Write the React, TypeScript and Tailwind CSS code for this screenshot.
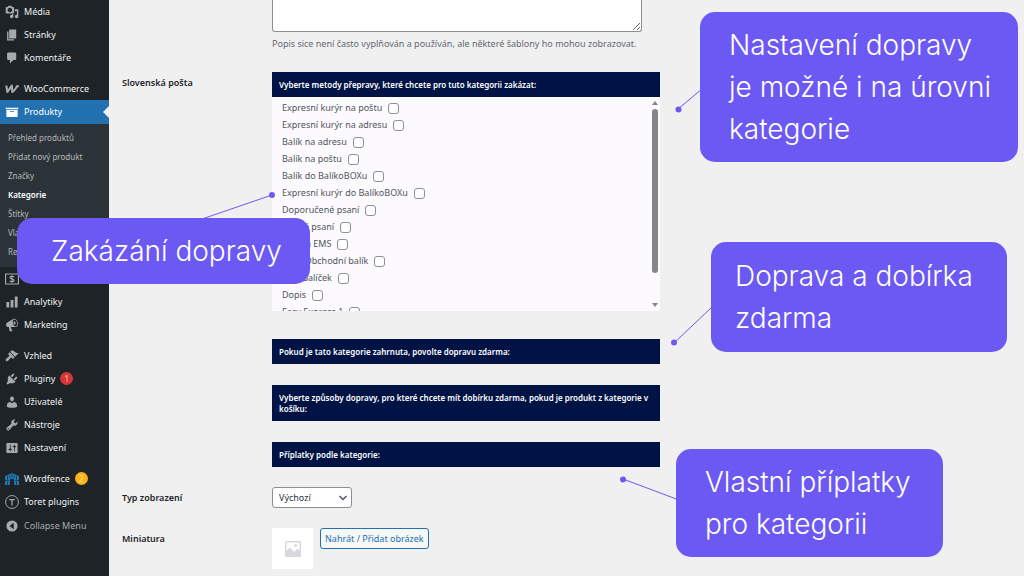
import type { ReactNode } from 'react';
import clsx from 'clsx';

interface NavEntry {
    label: string;
    icon: ReactNode;
    active?: boolean;
    badge?: ReactNode;
}

function Dashicon({ d }: { d: string }) {
    return (
        <svg viewBox="0 0 20 20" className="h-3.5 w-3.5" fill="currentColor" fillRule="evenodd" aria-hidden="true">
            <path d={d} />
        </svg>
    );
}

const content: NavEntry[] = [
    {
        label: 'Média',
        icon: (
            <svg viewBox="0 0 20 20" className="h-3.5 w-3.5" fill="currentColor" fillRule="evenodd" aria-hidden="true">
                <path d="M13 11V4c0-.55-.45-1-1-1h-1.67L9 1H5L3.67 3H2c-.55 0-1 .45-1 1v7c0 .55.45 1 1 1h10c.55 0 1-.45 1-1zM7 4c1.900 0 3.300 1.500 3.300 3.300S8.900 10.500 7 10.500 3.700 9.100 3.700 7.300 5.100 4 7 4z" />
                <path d="M14 6h5v10.5c0 1.38-1.12 2.5-2.5 2.5S14 17.88 14 16.5s1.12-2.5 2.5-2.5c.17 0 .34.02.5.05V9h-3V6zm-4 8.05V13h2v3.5c0 1.38-1.12 2.5-2.5 2.5S7 17.88 7 16.5 8.12 14 9.5 14c.17 0 .34.02.5.05z" />
            </svg>
        ),
    },
    { label: 'Stránky', icon: <Dashicon d="M6 15V2h10v13H6zm-1 1h8v2H3V5h2v11z" /> },
    {
        label: 'Komentáře',
        icon: <Dashicon d="M5 2h9c1.1 0 2 .9 2 2v7c0 1.1-.9 2-2 2h-2l-5 5v-5H5c-1.1 0-2-.9-2-2V4c0-1.1.9-2 2-2z" />,
    },
];

const shop: NavEntry[] = [
    {
        label: 'WooCommerce',
        icon: (
            <svg viewBox="0 0 20 20" className="h-3.5 w-3.5" fill="none" stroke="currentColor" strokeWidth="3" strokeLinejoin="round" aria-hidden="true">
                <path d="M1.800 5l1.700 9.200L9.800 5.200l.6 9c2.600-1.200 4.800-4.600 7.600-9.200" />
                <path d="M16 6.200h4" strokeWidth="2.400" />
            </svg>
        ),
    },
    {
        label: 'Produkty',
        active: true,
        icon: <Dashicon d="M19 4v2H1V4h18zM2 7h16v10H2V7zm11 3V9H7v1h6z" />,
    },
];

const submenu = ['Přehled produktů', 'Přidat nový produkt', 'Značky', 'Kategorie', 'Štítky', 'Vlastnosti', 'Recenze'];

const reports: NavEntry[] = [
    {
        label: 'Platby',
        icon: (
            <svg viewBox="0 0 20 20" className="h-3.5 w-3.5" fill="none" stroke="currentColor" strokeWidth="1.600" aria-hidden="true">
                <path d="M.8 2.800h18.400v14.400H.8z" />
                <path d="M13 7.300c-.6-.9-1.600-1.300-3-1.300-1.700 0-2.900.7-2.900 2 0 2.800 5.900 1.200 5.900 4 0 1.300-1.200 2-3 2-1.400 0-2.500-.4-3.100-1.300M10 4.500v11" />
            </svg>
        ),
    },
    { label: 'Analytiky', icon: <Dashicon d="M18 18V2h-4v16h4zm-6 0V7H8v11h4zm-6 0v-8H2v8h4z" /> },
    {
        label: 'Marketing',
        icon: (
            <Dashicon d="M18.15 5.94c.46 1.62.38 3.22-.02 4.48-.42 1.28-1.26 2.18-2.3 2.48-.16.06-.26.06-.4.06-.06.02-.12.02-.18.02-.06.02-.14.02-.22.02h-6.8l2.22 5.5c.02.14-.06.26-.14.34-.08.1-.24.16-.34.16H6.95c-.1 0-.26-.06-.34-.16-.08-.08-.16-.2-.14-.34l-1-5.5H4.25l-.02-.02c-.5.06-1.08-.18-1.54-.62s-.88-1.08-1.06-1.88c-.24-.8-.2-1.56-.02-2.2.18-.62.58-1.08 1.06-1.3l.02-.02 9-5.4c.1-.06.18-.1.24-.16.06-.04.14-.08.24-.12.16-.08.28-.12.5-.18 1.04-.3 2.24.1 3.22.98s1.84 2.24 2.26 3.86zm-2.58 5.98h-.02c.4-.1.74-.34 1.04-.7.58-.7.86-1.76.86-3.04 0-.64-.1-1.3-.28-1.98-.34-1.36-1.02-2.5-1.78-3.24s-1.68-1.1-2.46-.88c-.82.22-1.4.96-1.7 2-.32 1.04-.28 2.36.06 3.72.38 1.36 1 2.5 1.8 3.24.78.74 1.62 1.1 2.48.88zm-2.54-7.08c.22-.04.42-.02.62.04.38.16.76.48 1.02 1s.42 1.2.42 1.78c0 .3-.04.56-.12.8-.18.48-.44.84-.86.94-.34.1-.8-.06-1.14-.4s-.64-.86-.78-1.5c-.18-.62-.12-1.24.02-1.72s.48-.84.82-.94z" />
        ),
    },
];

const admin: NavEntry[] = [
    {
        label: 'Vzhled',
        icon: (
            <Dashicon d="M14.48 11.06L7.41 3.99l1.5-1.5c.5-.56 2.3-.47 3.51.32 1.21.8 1.43 1.28 2.91 2.1 1.18.64 2.45 1.26 4.45.85zm-.71.71L6.7 4.7 4.93 6.47c-.39.39-.39 1.02 0 1.41l1.06 1.06c.39.39.39 1.03 0 1.42-.6.6-1.43 1.11-2.21 1.69-.35.26-.7.53-1.01.84C1.43 14.23.4 16.08 1.4 17.07c.99 1 2.84-.03 4.18-1.36.31-.31.58-.66.85-1.02.57-.78 1.08-1.61 1.69-2.21.39-.39 1.02-.39 1.41 0l1.06 1.06c.39.39 1.02.39 1.41 0z" />
        ),
    },
    {
        label: 'Pluginy',
        badge: <span className="flex h-[13px] w-[13px] items-center justify-center rounded-full bg-[#d63638] text-[8px] text-[#fbd7a0]">1</span>,
        icon: (
            <Dashicon d="M13.11 4.36L9.87 7.6 8 5.73l3.24-3.24c.35-.34 1.05-.2 1.56.32.52.51.66 1.21.31 1.55zm-8 1.77l.91-1.12 9.01 9.01-1.19.84c-.71.71-2.63 1.16-3.82 1.16H6.14L4.9 17.26c-.59.59-1.54.59-2.12 0-.59-.58-.59-1.53 0-2.12l1.24-1.24v-3.88c0-1.13.4-3.19 1.09-3.89zm7.26 3.97l3.24-3.24c.34-.35 1.04-.21 1.55.31.52.51.66 1.21.31 1.55l-3.24 3.25z" />
        ),
    },
    {
        label: 'Uživatelé',
        icon: (
            <Dashicon d="M10 9.25c-2.27 0-2.73-3.44-2.73-3.44C7 4.02 7.82 2 9.97 2c2.16 0 2.98 2.02 2.71 3.81 0 0-.41 3.44-2.68 3.44zm0 2.57L12.72 10c2.39 0 4.52 2.33 4.52 4.53v2.49s-3.65 1.13-7.24 1.13c-3.65 0-7.24-1.13-7.24-1.13v-2.49c0-2.25 1.94-4.48 4.47-4.48z" />
        ),
    },
    {
        label: 'Nástroje',
        icon: (
            <Dashicon d="M16.68 9.77c-1.34 1.34-3.3 1.67-4.95.99l-5.41 6.52c-.99.99-2.59.99-3.58 0s-.99-2.59 0-3.57l6.52-5.42c-.68-1.65-.35-3.61.99-4.95 1.28-1.28 3.12-1.62 4.72-1.06l-2.89 2.89 2.82 2.82 2.86-2.87c.53 1.58.18 3.39-1.08 4.65zM3.81 16.21c.4.39 1.04.39 1.43 0 .4-.4.4-1.04 0-1.43-.39-.4-1.03-.4-1.43 0-.39.39-.39 1.03 0 1.43z" />
        ),
    },
    {
        label: 'Nastavení',
        icon: (
            <Dashicon d="M18 16V4c0-.55-.45-1-1-1H3c-.55 0-1 .45-1 1v12c0 .55.45 1 1 1h14c.55 0 1-.45 1-1zM8 11h1c.55 0 1 .45 1 1s-.45 1-1 1H8v1.5c0 .28-.22.5-.5.5s-.5-.22-.5-.5V13H6c-.55 0-1-.45-1-1s.45-1 1-1h1V5.5c0-.28.22-.5.5-.5s.5.22.5.5V11zm5-2h-1c-.55 0-1-.45-1-1s.45-1 1-1h1V5.5c0-.28.22-.5.5-.5s.5.22.5.5V7h1c.55 0 1 .45 1 1s-.45 1-1 1h-1v5.5c0 .28-.22.5-.5.5s-.5-.22-.5-.5V9z" />
        ),
    },
];

const plugins: NavEntry[] = [
    {
        label: 'Wordfence',
        badge: <span className="flex h-[13px] w-[13px] items-center justify-center rounded-full bg-[#fcb214] text-[8px] text-[#fde4a8]">2</span>,
        icon: (
            <svg viewBox="0 0 20 20" className="h-3.5 w-3.5 text-[#2179b5]" fill="currentColor" aria-hidden="true">
                <path d="M0 5.500C2 5.300 3.500 4.700 5 3.500c2-.2 3.500-1 5-2.500 1.500 1.500 3 2.300 5 2.500 1.500 1.200 3 1.800 5 2V18.500h-7V12c0-1.600-1.400-2.500-3-2.500S7 10.400 7 12v6.500H0z" />
                <path d="M3.500 6v5M7 5v4M10 3.500v4M13 5v4M16.500 6v5M3.500 13.500v5M16.500 13.500v5M0 12.200h5.500M14.500 12.200H20" stroke="#1d2327" strokeWidth="1" />
            </svg>
        ),
    },
    {
        label: 'Toret plugins',
        icon: (
            <svg viewBox="0 0 20 20" className="h-3.5 w-3.5" fill="none" stroke="currentColor" aria-hidden="true">
                <circle cx="10" cy="10" r="9.200" strokeWidth="1.400" />
                <path d="M6 6.500h8M10 6.500V15" strokeWidth="1.800" />
            </svg>
        ),
    },
];

const methods = [
    'Expresní kurýr na poštu',
    'Expresní kurýr na adresu',
    'Balík na adresu',
    'Balík na poštu',
    'Balík do BalíkoBOXu',
    'Expresní kurýr do BalíkoBOXu',
    'Doporučené psaní',
    'Cenné psaní',
    'Zásilka EMS',
    'Balík Obchodní balík',
    'EMS balíček',
    'Dopis',
    'Easy Express 1',
];

function NavGroup({ items }: { items: NavEntry[] }) {
    return (
        <ul>
            {items.map((item) => (
                <li key={item.label}>
                    <a
                        href="#"
                        className={clsx(
                            'relative flex items-center gap-[5px] pl-[5px] text-[9px]',
                            item.active ? 'h-6 bg-[#2271b1] text-white' : 'h-[23px] text-[#f0f0f1]',
                        )}
                    >
                        <span className={item.active ? 'text-white' : 'text-[#a7aaad]'}>{item.icon}</span>
                        <span>{item.label}</span>
                        {item.badge}
                        {item.active && (
                            <span className="absolute right-0 top-1/2 h-0 w-0 -translate-y-1/2 border-y-6 border-r-6 border-y-transparent border-r-[#f0f0f1]" />
                        )}
                    </a>
                </li>
            ))}
        </ul>
    );
}

function Sidebar() {
    return (
        <nav className="min-h-screen w-[109px] shrink-0 bg-[#1d2327]" aria-label="Administrace">
            <NavGroup items={content} />
            <div className="h-2" />
            <NavGroup items={shop} />
            <ul className="bg-[#2c3338] pt-1 pb-1.5">
                {submenu.map((label) => (
                    <li key={label}>
                        <a
                            href="#"
                            className={clsx(
                                'flex h-[19px] items-center pl-2 text-[8px] whitespace-nowrap',
                                label === 'Kategorie' ? 'font-semibold text-white' : 'text-[#b6b8ba]',
                            )}
                        >
                            {label}
                        </a>
                    </li>
                ))}
            </ul>
            <NavGroup items={reports} />
            <div className="h-2" />
            <NavGroup items={admin} />
            <div className="h-2" />
            <NavGroup items={plugins} />
            <button type="button" className="flex h-[25px] items-center gap-[5px] pl-[5px] text-[9px] text-[#a7aaad]">
                <Dashicon d="M10 2a8 8 0 1 0 0 16 8 8 0 0 0 0-16zm2.500 3.500v9L6.500 10z" />
                Collapse Menu
            </button>
        </nav>
    );
}

function PanelTitle({ children }: { children: ReactNode }) {
    return <h3 className="bg-[#001344] px-[7px] py-[7px] text-[8px] leading-[11px] font-semibold text-white">{children}</h3>;
}

function ShippingList() {
    return (
        <div className="flex h-[214px] overflow-hidden bg-[#fcfafc]">
            <ul className="flex-1 px-2.5 pt-0.5">
                {methods.map((name) => (
                    <li key={name}>
                        <label className="flex h-[17px] items-center gap-1.5 text-[9px] text-[#50575e]">
                            {name}
                            <input type="checkbox" className="mt-0.5 h-[11px] w-[11px] appearance-none rounded-[3px] border border-[#8c8f94] bg-white" />
                        </label>
                    </li>
                ))}
            </ul>
            <div className="flex w-2.5 flex-col items-center gap-1 py-1" aria-hidden="true">
                <span className="h-0 w-0 border-x-3 border-b-4 border-x-transparent border-b-[#858585]" />
                <span className="h-[164px] w-1.5 rounded-full bg-[#858787]" />
                <span className="mt-auto h-0 w-0 border-x-3 border-t-4 border-x-transparent border-t-[#858585]" />
            </div>
        </div>
    );
}

function Row({ label, htmlFor, className, children }: { label: string; htmlFor?: string; className?: string; children: ReactNode }) {
    return (
        <div className={clsx('grid grid-cols-[150px_minmax(0,388px)]', className)}>
            <label htmlFor={htmlFor} className="pt-[5px] text-[9px] leading-3 font-semibold text-[#1d2327]">
                {label}
            </label>
            <div>{children}</div>
        </div>
    );
}

interface CalloutProps {
    lines: string[];
    className: string;
}

function Callout({ lines, className }: CalloutProps) {
    return (
        <aside className={clsx('absolute rounded-[15px] bg-[#6c59f3] text-[28px] leading-[42px] font-light whitespace-nowrap text-white', className)}>
            {lines.map((line) => (
                <p key={line}>{line}</p>
            ))}
        </aside>
    );
}

export default function App() {
    return (
        <div className="relative flex min-h-screen overflow-hidden bg-[#f0f0f1] font-['Noto_Sans','Open_Sans',sans-serif]">
            <Sidebar />

            <main className="min-w-0 flex-1 pl-[13px]">
                <Row label="" htmlFor="description">
                    <textarea
                        id="description"
                        aria-label="Popis"
                        className="block h-8 w-full max-w-[370px] resize rounded-b-[3px] border border-t-0 border-[#8c8f94] bg-white"
                    />
                    <p className="mt-1.5 text-[9px] leading-3 whitespace-nowrap text-[#646970]">
                        Popis sice není často vyplňován a používán, ale některé šablony ho mohou zobrazovat.
                    </p>
                </Row>

                <Row label="Slovenská pošta" className="mt-[22px]">
                    <PanelTitle>Vyberte metody přepravy, které chcete pro tuto kategorii zakázat:</PanelTitle>
                    <ShippingList />
                    <div className="mt-7 flex flex-col gap-[21px]">
                        <PanelTitle>Pokud je tato kategorie zahrnuta, povolte dopravu zdarma:</PanelTitle>
                        <PanelTitle>Vyberte způsoby dopravy, pro které chcete mít dobírku zdarma, pokud je produkt z kategorie v košíku:</PanelTitle>
                        <PanelTitle>Příplatky podle kategorie:</PanelTitle>
                    </div>
                </Row>

                <Row label="Typ zobrazení" htmlFor="display-type" className="mt-5">
                    <div className="relative w-20">
                        <select
                            id="display-type"
                            className="block h-[21px] w-20 appearance-none rounded-[3px] border border-[#8c8f94] bg-white pl-1.5 text-[9px] text-[#2c3338]"
                        >
                            <option>Výchozí</option>
                        </select>
                        <svg viewBox="0 0 10 10" className="pointer-events-none absolute top-1.5 right-1 h-2.5 w-2.5" fill="none" stroke="#50575e" strokeWidth="1.500">
                            <path d="M1.500 3L5 6.500 8.500 3" />
                        </svg>
                    </div>
                </Row>

                <Row label="Miniatura" className="mt-5">
                    <div className="flex items-start gap-[7px]">
                        <div className="flex h-[41px] w-[41px] items-center justify-center bg-white">
                            <svg viewBox="0 0 16 16" className="h-4 w-4" aria-hidden="true">
                                <rect width="16" height="16" rx="1" fill="#d5d8dc" />
                                <path d="M1.500 1.500h13v8.500l-2-2.500L9 11 5.500 6.500l-4 3z" fill="#fff" />
                                <circle cx="10.500" cy="4.500" r="1.600" fill="#d5d8dc" />
                            </svg>
                        </div>
                        <button type="button" className="h-[21px] rounded-[3px] border border-[#2271b1] bg-[#f6f7f7] px-1 text-[9px] whitespace-nowrap text-[#2271b1]">
                            Nahrát / Přidat obrázek
                        </button>
                    </div>
                </Row>
            </main>

            {/* annotations float over the admin screen */}
            <div className="font-['Inter',sans-serif]">
                <svg className="pointer-events-none absolute top-0 left-0 h-[576px] w-[1024px]" stroke="#6c59f3" fill="#6c59f3" aria-hidden="true">
                    <path d="M678 109l24-20M272 195l-70 24M674 343l38-36M623 479l56 21" strokeWidth="1" />
                    <g stroke="none">
                        <circle cx="678.500" cy="109.500" r="3" />
                        <circle cx="272" cy="195" r="3" />
                        <circle cx="674" cy="342.500" r="3" />
                        <circle cx="623" cy="479.500" r="3" />
                    </g>
                </svg>
                <Callout lines={['Nastavení dopravy', 'je možné i na úrovni', 'kategorie']} className="top-[12px] left-[700px] w-[318px] py-3 pl-[29px]" />
                <Callout lines={['Zakázání dopravy']} className="top-[218px] left-[17px] w-[293px] py-3 pl-[34px]" />
                <Callout lines={['Doprava a dobírka', 'zdarma']} className="top-[242px] left-[711px] w-[296px] py-[13px] pl-6" />
                <Callout lines={['Vlastní příplatky', 'pro kategorii']} className="top-[449px] left-[676px] w-[267px] py-3 pl-[29px]" />
            </div>
        </div>
    );
}
